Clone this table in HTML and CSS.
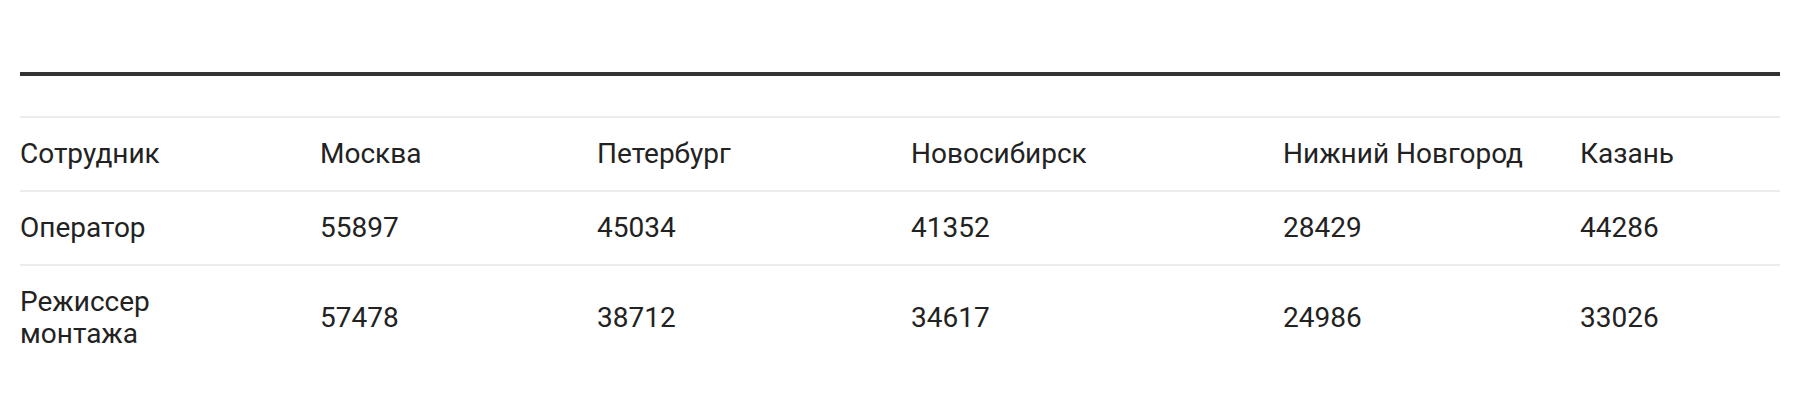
FILE: index.html
```html
<!DOCTYPE html>
<html lang="ru">
<head>
  <meta charset="UTF-8" />
  <meta name="viewport" content="width=device-width, initial-scale=1.0"/>
  <title>Зарплаты по городам</title>
  <link rel="stylesheet" href="styles.css">
</head>
<body>
  <div class="page">
    <div class="rule"></div>
    <table class="salary">
      <colgroup>
        <col class="c1">
        <col class="c2">
        <col class="c3">
        <col class="c4">
        <col class="c5">
        <col>
      </colgroup>
      <thead>
        <tr>
          <th>Сотрудник</th>
          <th>Москва</th>
          <th>Петербург</th>
          <th>Новосибирск</th>
          <th>Нижний Новгород</th>
          <th>Казань</th>
        </tr>
      </thead>
      <tbody>
        <tr>
          <td><span class="role">Оператор</span></td>
          <td>55897</td>
          <td>45034</td>
          <td>41352</td>
          <td>28429</td>
          <td>44286</td>
        </tr>
        <tr>
          <td><span class="role">Режиссер монтажа</span></td>
          <td>57478</td>
          <td>38712</td>
          <td>34617</td>
          <td>24986</td>
          <td>33026</td>
        </tr>
      </tbody>
    </table>
  </div>
</body>
</html>
```

FILE: styles.css
```css
body {
  margin: 0;
  background: #fff;
  font-family: Roboto, "Liberation Sans", Arial, sans-serif;
  color: #222;
}

.page {
  padding: 72px 16px 0 20px;
}

.rule {
  height: 4px;
  background: #333;
  margin-bottom: 40px;
}

.salary {
  width: 100%;
  border-collapse: collapse;
  table-layout: fixed;
}

.salary .c1 { width: 300px; }
.salary .c2 { width: 277px; }
.salary .c3 { width: 314px; }
.salary .c4 { width: 372px; }
.salary .c5 { width: 297px; }

.salary th,
.salary td {
  border-top: 2px solid #ececec;
  padding: 20px 0;
  font-size: 28px;
  line-height: 32px;
  font-weight: normal;
  text-align: left;
  vertical-align: middle;
}

.role {
  display: block;
  max-width: 180px;
}
```
